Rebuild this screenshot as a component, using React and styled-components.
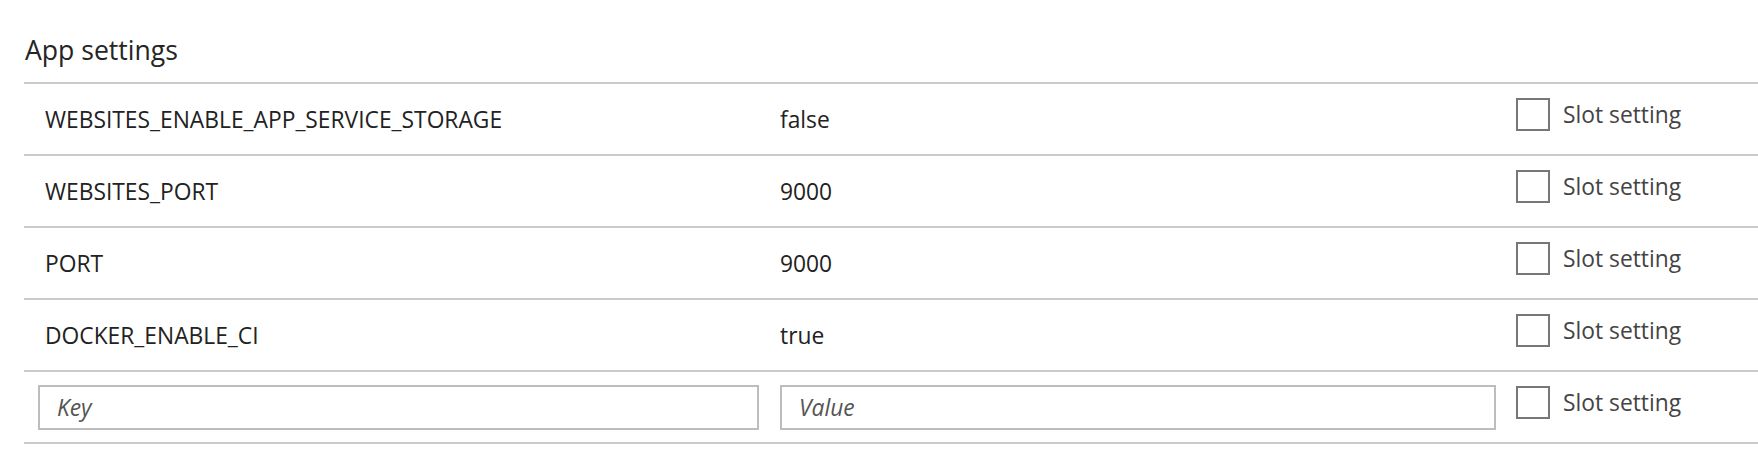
import React from "react";
import styled, { createGlobalStyle } from "styled-components";

const GlobalStyle = createGlobalStyle`
  html, body { margin: 0; padding: 0; background: #ffffff; }
  body { font-family: "Open Sans", "Noto Sans", sans-serif; color: #252525; }
  * { box-sizing: border-box; }
`;

const Page = styled.div`
  padding: 32px 0 0 24px;
  width: 1758px;
`;

const Title = styled.h2`
  margin: 0 0 14px 1px;
  font-size: 26.6px;
  font-weight: 400;
  line-height: 36px;
  color: #252525;
`;

const Table = styled.div`
  border-top: 2px solid #cbcbcb;
`;

const Row = styled.div`
  display: grid;
  grid-template-columns: 742px 736px 1fr;
  align-items: center;
  height: 72px;
  padding-left: 14px;
  border-bottom: 2px solid #cbcbcb;
`;

const Cell = styled.div`
  font-size: 22.8px;
  line-height: 31px;
  color: #222;
  padding-left: ${(p) => p.$pad || 0}px;
`;

const Field = styled.input`
  display: block;
  width: ${(p) => p.$w}px;
  height: 45px;
  border: 2px solid #bdbdbd;
  border-radius: 0;
  padding: 0 0 0 17px;
  font-family: "Open Sans", "Noto Sans", sans-serif;
  font-size: 22.8px;
  color: #222;
  background: #fff;
  outline: none;
  &::placeholder {
    color: #555;
    font-style: italic;
    opacity: 1;
  }
`;

const SlotLabel = styled.label`
  display: flex;
  align-items: center;
  gap: 13px;
  padding-bottom: 9px;
  font-size: 22.8px;
  line-height: 31px;
  color: #444;
  cursor: pointer;
`;

const Box = styled.span`
  display: block;
  width: 34px;
  height: 33px;
  border: 2px solid #777;
  background: #fff;
  flex: none;
`;

const settings = [
  { key: "WEBSITES_ENABLE_APP_SERVICE_STORAGE", value: "false" },
  { key: "WEBSITES_PORT", value: "9000" },
  { key: "PORT", value: "9000" },
  { key: "DOCKER_ENABLE_CI", value: "true" },
];

function Slot() {
  return (
    <SlotLabel>
      <Box />
      <span>Slot setting</span>
    </SlotLabel>
  );
}

export default function App() {
  return (
    <>
      <GlobalStyle />
      <Page>
        <Title>App settings</Title>
        <Table>
          {settings.map((s) => (
            <Row key={s.key}>
              <Cell $pad={7}>{s.key}</Cell>
              <Cell>{s.value}</Cell>
              <Slot />
            </Row>
          ))}
          <Row>
            <div>
              <Field placeholder="Key" $w={721} />
            </div>
            <div>
              <Field placeholder="Value" $w={716} />
            </div>
            <Slot />
          </Row>
        </Table>
      </Page>
    </>
  );
}
